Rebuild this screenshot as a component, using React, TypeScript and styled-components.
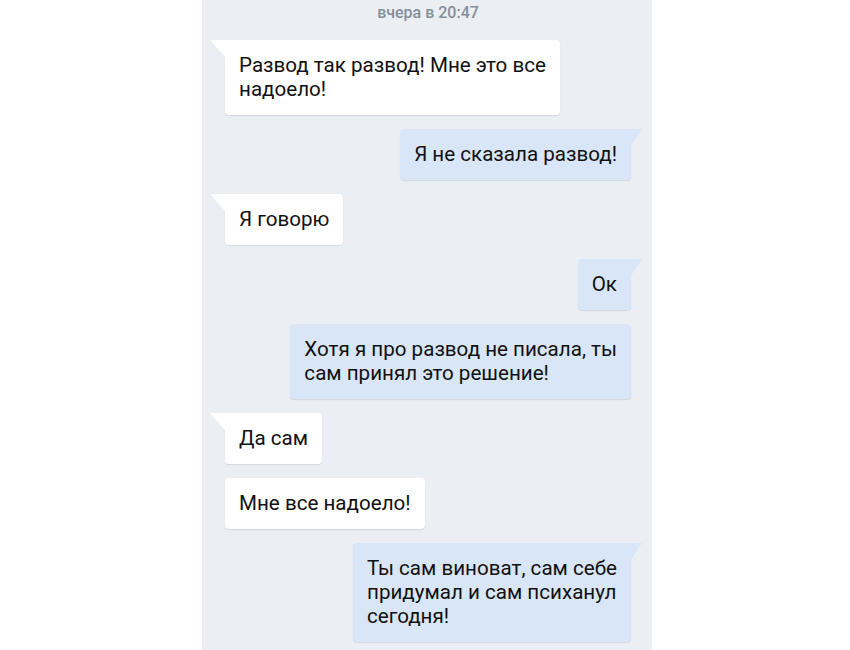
import React from 'react';
import styled, { createGlobalStyle, css } from 'styled-components';

const GlobalStyle = createGlobalStyle`
  html, body {
    margin: 0;
    padding: 0;
    background: #ffffff;
    height: 650px;
    overflow: hidden;
  }
`;

const PANEL_BG = '#ebeef3';
const OUT_BG = '#d9e6f7';
const IN_BG = '#ffffff';

const StyledPage = styled.div`
  display: flex;
  padding-left: 202px;
  height: 650px;
`;

const StyledChat = styled.div`
  background: ${PANEL_BG};
  box-sizing: border-box;
  display: flex;
  flex-direction: column;
  font-family: Roboto, 'Noto Sans', sans-serif;
  gap: 14px;
  padding: 0 21px 0 23px;
  width: 450px;
`;

const StyledDate = styled.div`
  color: #858e99;
  font-size: 16px;
  font-weight: 500;
  line-height: 26px;
  text-align: center;
`;

const StyledRow = styled.div<{ $out?: boolean }>`
  display: flex;
  justify-content: ${(p) => (p.$out ? 'flex-end' : 'flex-start')};
`;

const tailLeft = css`
  &::before {
    background: ${IN_BG};
    clip-path: polygon(0 0, 100% 0, 100% 100%);
    content: '';
    height: 18px;
    left: -15px;
    position: absolute;
    top: 0;
    width: 16px;
  }
`;

const tailRight = css`
  &::before {
    background: ${OUT_BG};
    clip-path: polygon(0 0, 100% 0, 0 100%);
    content: '';
    height: 18px;
    position: absolute;
    right: -11px;
    top: 0;
    width: 12px;
  }
`;

const StyledBubble = styled.div<{ $out?: boolean; $tail?: boolean }>`
  background: ${(p) => (p.$out ? OUT_BG : IN_BG)};
  border-radius: ${(p) =>
    p.$tail ? (p.$out ? '4px 0 4px 4px' : '0 4px 4px 4px') : '4px'};
  box-shadow: 0 1px 1px rgba(60, 80, 110, 0.14);
  color: #111;
  font-size: 20.6px;
  line-height: 24px;
  padding: 13px 14px 14px 14px;
  position: relative;
  ${(p) => p.$tail && (p.$out ? tailRight : tailLeft)}
`;

interface Message {
  out?: boolean;
  tail?: boolean;
  lines: string[];
}

const MESSAGES: Message[] = [
  { tail: true, lines: ['Развод так развод! Мне это все', 'надоело!'] },
  { out: true, tail: true, lines: ['Я не сказала развод!'] },
  { tail: true, lines: ['Я говорю'] },
  { out: true, tail: true, lines: ['Ок'] },
  { out: true, lines: ['Хотя я про развод не писала, ты', 'сам принял это решение!'] },
  { tail: true, lines: ['Да сам'] },
  { lines: ['Мне все надоело!'] },
  {
    out: true,
    tail: true,
    lines: ['Ты сам виноват, сам себе', 'придумал и сам психанул', 'сегодня!'],
  },
];

const App: React.FC = () => {
  return (
    <>
      <GlobalStyle />
      <StyledPage>
        <StyledChat>
          <StyledDate>вчера в 20:47</StyledDate>
          {MESSAGES.map((m, i) => (
            <StyledRow key={i} $out={m.out}>
              <StyledBubble $out={m.out} $tail={m.tail}>
                {m.lines.map((line, j) => (
                  <React.Fragment key={j}>
                    {j > 0 && <br />}
                    {line}
                  </React.Fragment>
                ))}
              </StyledBubble>
            </StyledRow>
          ))}
        </StyledChat>
      </StyledPage>
    </>
  );
};

export default App;
